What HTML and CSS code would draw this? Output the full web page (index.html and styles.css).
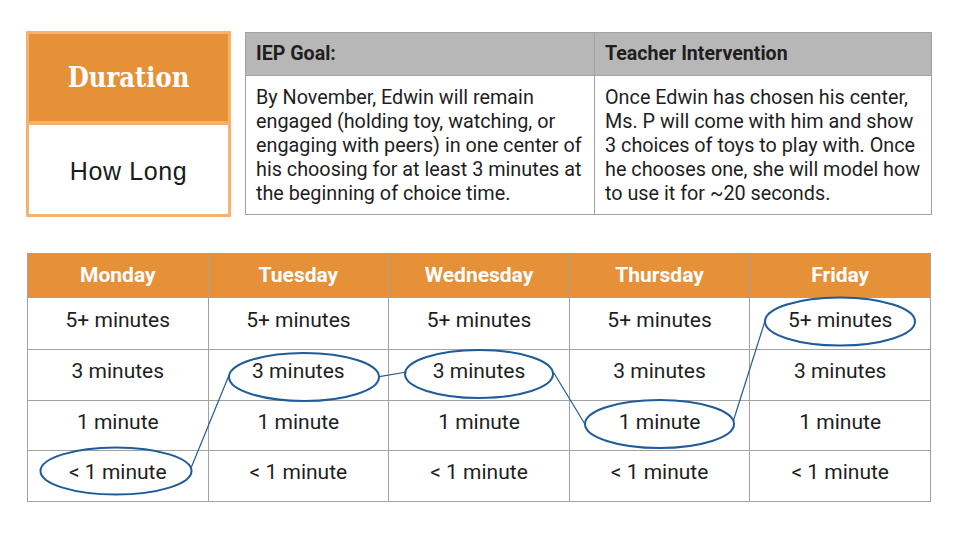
FILE: index.html
```html
<!DOCTYPE html>
<html>
<head>
<meta charset="utf-8">
<link rel="stylesheet" href="styles.css">
</head>
<body>
<div class="slide">
  <div class="top">
    <div class="duration">
      <div class="duration-head">Duration</div>
      <div class="duration-body">How Long</div>
    </div>
    <table class="goal">
      <colgroup><col class="c1"><col class="c2"></colgroup>
      <thead>
        <tr><th>IEP Goal:</th><th>Teacher Intervention</th></tr>
      </thead>
      <tbody>
        <tr>
          <td class="left">By November, Edwin will remain engaged (holding toy, watching, or engaging with peers) in one center of his choosing for at least 3 minutes at the beginning of choice time.</td>
          <td class="right">Once Edwin has chosen his center, Ms. P will come with him and show 3 choices of toys to play with. Once he chooses one, she will model how to use it for ~20 seconds.</td>
        </tr>
      </tbody>
    </table>
  </div>
  <div class="schedule">
    <table class="days">
      <thead>
        <tr><th>Monday</th><th>Tuesday</th><th>Wednesday</th><th>Thursday</th><th>Friday</th></tr>
      </thead>
      <tbody>
        <tr class="r1"><td>5+ minutes</td><td>5+ minutes</td><td>5+ minutes</td><td>5+ minutes</td><td>5+ minutes</td></tr>
        <tr class="r2"><td>3 minutes</td><td>3 minutes</td><td>3 minutes</td><td>3 minutes</td><td>3 minutes</td></tr>
        <tr class="r3"><td>1 minute</td><td>1 minute</td><td>1 minute</td><td>1 minute</td><td>1 minute</td></tr>
        <tr class="r4"><td>&lt; 1 minute</td><td>&lt; 1 minute</td><td>&lt; 1 minute</td><td>&lt; 1 minute</td><td>&lt; 1 minute</td></tr>
      </tbody>
    </table>
    <svg class="marks" viewBox="0 0 904 250" width="904" height="250">
      <g fill="none" stroke="#1f5c99" stroke-width="2">
        <ellipse cx="89" cy="218" rx="75.5" ry="23.5"/>
        <ellipse cx="277" cy="124" rx="75" ry="24"/>
        <ellipse cx="452" cy="121" rx="74" ry="24"/>
        <ellipse cx="632.5" cy="171" rx="74.5" ry="24"/>
        <ellipse cx="813" cy="68.5" rx="75" ry="24"/>
      </g>
      <g fill="none" stroke="#1f5c99" stroke-width="1.2">
        <line x1="163.7" y1="215.7" x2="202" y2="122.3"/>
        <line x1="352.3" y1="123.7" x2="379.7" y2="119"/>
        <line x1="526.3" y1="119" x2="558" y2="171.3"/>
        <line x1="706.3" y1="168" x2="738" y2="68"/>
      </g>
    </svg>
  </div>
</div>
</body>
</html>
```

FILE: styles.css
```css
html, body {
  margin: 0;
  padding: 0;
  background: #ffffff;
}
.slide {
  width: 960px;
  height: 540px;
  overflow: hidden;
  font-family: Roboto, "Liberation Sans", sans-serif;
  color: #202020;
}
.top {
  display: flex;
  align-items: flex-start;
  padding: 31px 0 0 26px;
}
.duration {
  box-sizing: border-box;
  width: 205px;
  height: 186px;
  border: 3px solid #f6b26b;
  display: flex;
  flex-direction: column;
}
.duration-head {
  height: 91px;
  background: #e69138;
  border-bottom: 4px solid #f6b26b;
  color: #ffffff;
  font-family: "DejaVu Serif Condensed", "DejaVu Serif", serif;
  font-stretch: condensed;
  font-weight: bold;
  font-size: 27px;
  display: flex;
  align-items: center;
  justify-content: center;
  padding-top: 0;
  box-sizing: border-box;
}
.duration-body {
  flex: 1;
  display: flex;
  align-items: center;
  justify-content: center;
  font-family: "Liberation Sans", Arial, sans-serif;
  font-size: 25px;
  letter-spacing: 0.6px;
  color: #1a1a1a;
  padding-top: 3px;
  box-sizing: border-box;
}
.goal {
  margin: 1px 0 0 14px;
  width: 686px;
  border-collapse: collapse;
  table-layout: fixed;
  font-size: 19.8px;
  line-height: 24px;
  color: #1e1e1e;
}
.goal col.c1 { width: 349px; }
.goal col.c2 { width: 337px; }
.goal th, .goal td {
  border: 1px solid #a2a2a2;
  text-align: left;
  vertical-align: top;
  padding: 0 4px 0 10px;
}
.goal th {
  background: #b7b7b7;
  height: 42px;
  font-size: 19.6px;
  font-weight: bold;
  vertical-align: middle;
}
.goal td {
  height: 139px;
  padding-top: 10px;
  box-sizing: border-box;
}
.goal td.left { padding-right: 2px; }
.goal td.right { padding-right: 8px; }
.schedule {
  position: relative;
  margin: 36px 0 0 27px;
  width: 904px;
  height: 250px;
}
.days {
  width: 904px;
  border-collapse: collapse;
  table-layout: fixed;
  font-size: 21px;
}
.days th, .days td {
  border: 1px solid #a2a2a2;
  text-align: center;
  vertical-align: middle;
  padding: 0;
}
.days th {
  background: #e69138;
  color: #ffffff;
  font-weight: bold;
  height: 44px;
  padding-bottom: 2px;
  box-sizing: border-box;
}
.days td {
  color: #1e1e1e;
  padding-bottom: 8px;
  box-sizing: border-box;
}
.days tr.r1 td { height: 52px; }
.days tr.r2 td { height: 51px; }
.days tr.r3 td { height: 50px; }
.days tr.r4 td { height: 51px; }
.marks {
  position: absolute;
  left: 0;
  top: 0;
  pointer-events: none;
}
```
